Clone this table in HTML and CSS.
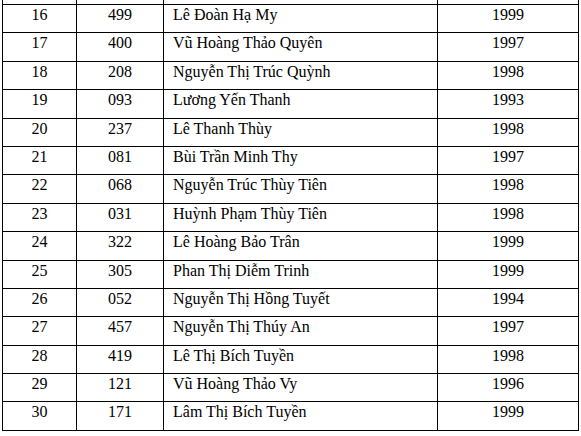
FILE: index.html
```html
<!DOCTYPE html>
<html lang="vi">
<head>
<meta charset="utf-8">
<title>Danh sách</title>
<link rel="stylesheet" href="styles.css">
</head>
<body>
<table class="list">
  <colgroup>
    <col class="c-stt">
    <col class="c-sbd">
    <col class="c-name">
    <col class="c-year">
  </colgroup>
  <tbody>
    <tr class="stub"><td></td><td></td><td></td><td></td></tr>
    <tr><td class="num">16</td><td class="num">499</td><td class="name">Lê Đoàn Hạ My</td><td class="num">1999</td></tr>
    <tr><td class="num">17</td><td class="num">400</td><td class="name">Vũ Hoàng Thảo Quyên</td><td class="num">1997</td></tr>
    <tr><td class="num">18</td><td class="num">208</td><td class="name">Nguyễn Thị Trúc Quỳnh</td><td class="num">1998</td></tr>
    <tr><td class="num">19</td><td class="num">093</td><td class="name">Lương Yến Thanh</td><td class="num">1993</td></tr>
    <tr><td class="num">20</td><td class="num">237</td><td class="name">Lê Thanh Thùy</td><td class="num">1998</td></tr>
    <tr><td class="num">21</td><td class="num">081</td><td class="name">Bùi Trần Minh Thy</td><td class="num">1997</td></tr>
    <tr><td class="num">22</td><td class="num">068</td><td class="name">Nguyễn Trúc Thùy Tiên</td><td class="num">1998</td></tr>
    <tr><td class="num">23</td><td class="num">031</td><td class="name">Huỳnh Phạm Thùy Tiên</td><td class="num">1998</td></tr>
    <tr><td class="num">24</td><td class="num">322</td><td class="name">Lê Hoàng Bảo Trân</td><td class="num">1999</td></tr>
    <tr><td class="num">25</td><td class="num">305</td><td class="name">Phan Thị Diễm Trinh</td><td class="num">1999</td></tr>
    <tr><td class="num">26</td><td class="num">052</td><td class="name">Nguyễn Thị Hồng Tuyết</td><td class="num">1994</td></tr>
    <tr><td class="num">27</td><td class="num">457</td><td class="name">Nguyễn Thị Thúy An</td><td class="num">1997</td></tr>
    <tr><td class="num">28</td><td class="num">419</td><td class="name">Lê Thị Bích Tuyền</td><td class="num">1998</td></tr>
    <tr><td class="num">29</td><td class="num">121</td><td class="name">Vũ Hoàng Thảo Vy</td><td class="num">1996</td></tr>
    <tr><td class="num">30</td><td class="num">171</td><td class="name">Lâm Thị Bích Tuyền</td><td class="num">1999</td></tr>
  </tbody>
</table>
</body>
</html>
```
FILE: styles.css
```css
html, body {
  margin: 0;
  padding: 0;
  background: #ffffff;
}

body {
  font-family: "Liberation Serif", "Times New Roman", serif;
  font-size: 16px;
  color: #000;
}

.list {
  margin: 0 0 0 2px;
  border-collapse: collapse;
  table-layout: fixed;
  width: 576px;
}

.c-stt { width: 74px; }
.c-sbd { width: 87px; }
.c-name { width: 274px; }
.c-year { width: 141px; }

.list td {
  border: 1px solid #000;
  height: 28.4px;
  padding: 1px 0 0 0;
  vertical-align: top;
  line-height: 18px;
  box-sizing: border-box;
}

.list .stub td {
  border-top: none;
  height: 4.5px;
  padding: 0;
}

.list td.num {
  text-align: center;
}

.list td.name {
  padding-left: 9px;
  text-align: left;
}
```
